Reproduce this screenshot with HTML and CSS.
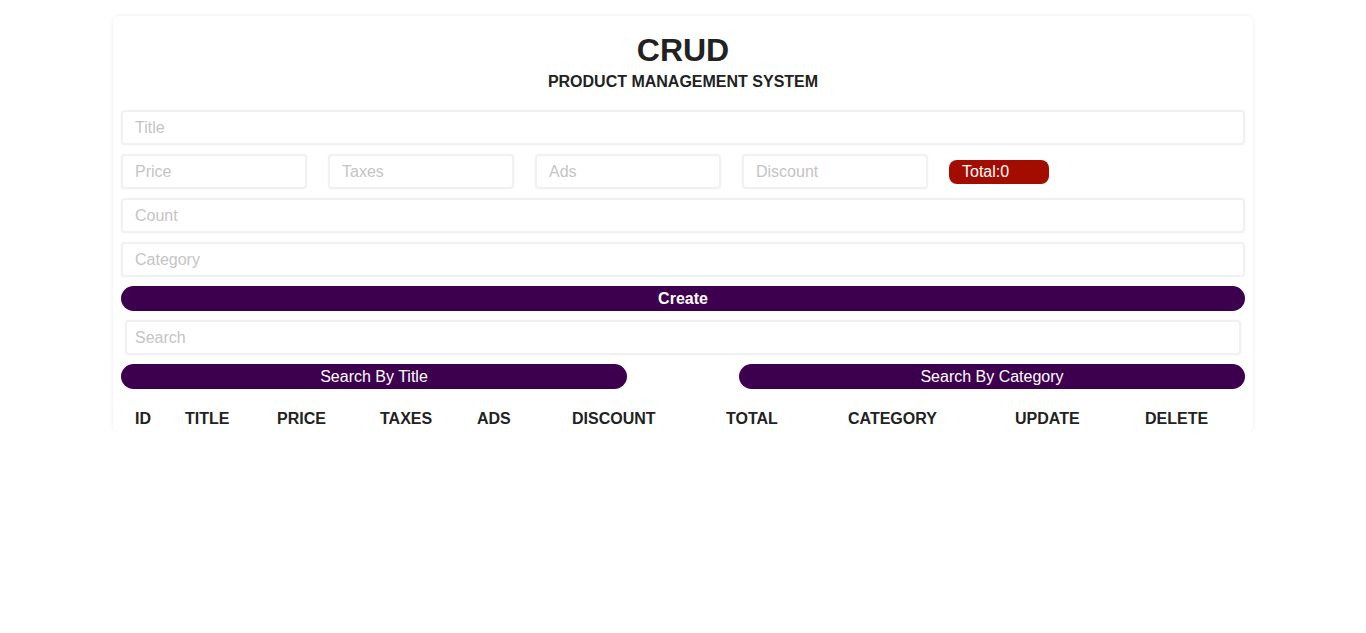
FILE: index.html
```html
<!DOCTYPE html>
<html>
<head>
<meta charset="utf-8">
<title>CRUD</title>
<link rel="stylesheet" href="styles.css">
</head>
<body>
<div class="crud">
  <div class="head">
    <h2 class="brand">CRUD</h2>
    <p class="subtitle">PRODUCT MANAGEMENT SYSTEM</p>
  </div>
  <div class="inputs">
    <input class="field" type="text" placeholder="Title">
    <div class="price">
      <input class="field small" type="number" placeholder="Price">
      <input class="field small" type="number" placeholder="Taxes">
      <input class="field small" type="number" placeholder="Ads">
      <input class="field small" type="number" placeholder="Discount">
      <small class="total">Total:0</small>
    </div>
    <input class="field" type="number" placeholder="Count">
    <input class="field" type="text" placeholder="Category">
    <button class="btn create">Create</button>
  </div>
  <div class="outputs">
    <div class="search-block">
      <input class="field search" type="text" placeholder="Search">
      <div class="btn-search">
        <button class="btn">Search By Title</button>
        <button class="btn">Search By Category</button>
      </div>
    </div>
    <table class="table">
      <colgroup>
        <col class="c1"><col class="c2"><col class="c3"><col class="c4"><col class="c5">
        <col class="c6"><col class="c7"><col class="c8"><col class="c9"><col class="c10">
      </colgroup>
      <tr>
        <th>ID</th>
        <th>TITLE</th>
        <th>PRICE</th>
        <th>TAXES</th>
        <th>ADS</th>
        <th>DISCOUNT</th>
        <th>TOTAL</th>
        <th>CATEGORY</th>
        <th>UPDATE</th>
        <th>DELETE</th>
      </tr>
    </table>
  </div>
</div>
</body>
</html>
```

FILE: styles.css
```css
* {
  box-sizing: border-box;
}

body {
  margin: 0;
  padding: 16px 0 0;
  background: #ffffff;
  color: #222222;
  font-family: "Liberation Sans", Arial, sans-serif;
}

.crud {
  width: 1140px;
  margin: 0 auto;
  padding: 8px 8px 1px;
  background: #ffffff;
  border-radius: 6px;
  box-shadow: 0 0 4px rgba(0, 0, 0, 0.08);
}

.head {
  text-align: center;
  padding-top: 8px;
}

.brand {
  margin: 0;
  font-size: 32px;
  font-weight: bold;
  line-height: 37px;
}

.subtitle {
  margin: 4px 0 0;
  font-size: 16px;
  font-weight: bold;
  line-height: 18px;
}

.inputs {
  margin-top: 19px;
  display: flex;
  flex-direction: column;
  gap: 9px;
}

.field {
  display: block;
  width: 100%;
  height: 35px;
  padding: 0 12px;
  border: 2px solid #f1f1f1;
  border-radius: 4px;
  box-shadow: 0 0 2px rgba(0, 0, 0, 0.06);
  background: #ffffff;
  font-family: "Liberation Sans", Arial, sans-serif;
  font-size: 16px;
  color: #222222;
  outline: none;
}

.field::placeholder {
  color: #c4c4c4;
}

.price {
  display: flex;
  align-items: center;
  gap: 21px;
}

.field.small {
  width: 186px;
}

.total {
  display: block;
  width: 100px;
  height: 24px;
  padding: 2px 13px;
  background: #a30d00;
  color: #ffffff;
  border-radius: 8px;
  font-size: 16px;
  line-height: 20px;
}

.btn {
  display: block;
  height: 25px;
  border: none;
  border-radius: 13px;
  background: #3d004f;
  color: #ffffff;
  font-family: "Liberation Sans", Arial, sans-serif;
  font-size: 16px;
  line-height: 25px;
  padding: 0;
  cursor: pointer;
}

.create {
  width: 100%;
  font-weight: bold;
}

.outputs {
  margin-top: 9px;
}

.search-block {
  display: flex;
  flex-direction: column;
  gap: 9px;
}

.field.search {
  width: auto;
  margin: 0 4px;
  padding: 0 8px;
}

.btn-search {
  display: flex;
  justify-content: space-between;
}

.btn-search .btn {
  width: 506px;
}

.table {
  width: 100%;
  margin-top: 18px;
  border-collapse: collapse;
  table-layout: fixed;
}

.table th {
  text-align: left;
  padding: 0;
  height: 24px;
  font-size: 16px;
  font-weight: bold;
  color: #222222;
}

.table th:first-child {
  padding-left: 14px;
}

.c1 { width: 64px; }
.c2 { width: 92px; }
.c3 { width: 103px; }
.c4 { width: 97px; }
.c5 { width: 95px; }
.c6 { width: 154px; }
.c7 { width: 122px; }
.c8 { width: 167px; }
.c9 { width: 130px; }
.c10 { width: 100px; }
```
